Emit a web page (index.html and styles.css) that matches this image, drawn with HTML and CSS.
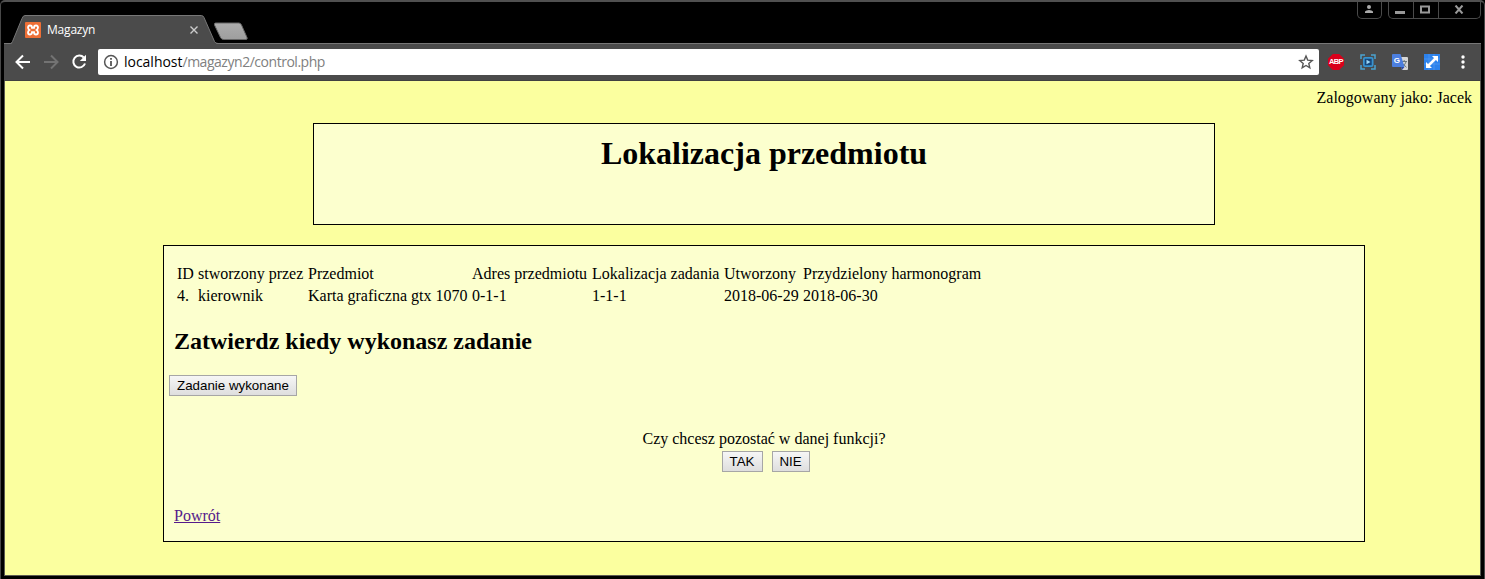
FILE: index.html
```html
<!DOCTYPE html>
<html lang="pl">
<head>
<meta charset="utf-8">
<title>Magazyn</title>
<link rel="stylesheet" href="styles.css">
</head>
<body>
<div class="window">
  <header class="strip">
    <div class="tab">
      <svg class="tab-shape" width="208" height="29" viewBox="0 0 208 29"><path d="M0 28.500H.5Q1.500 28.500 2.500 26.500L12 3.500Q13 .5 15 .5H191.500q1.500 0 2.500 2L204.500 26.500q1 2 3.500 2" fill="#4b4b4b" stroke="#777" stroke-width="1"/><path d="M2 28.500H206" stroke="#4b4b4b"/></svg>
      <svg class="favicon" width="16" height="16" viewBox="0 0 16 16"><rect width="16" height="16" rx="1" fill="#ee6f36"/><path d="M5 3.500C3.500 3.500 3 4.400 3 5.500C3 6.900 3.600 7.400 4.400 8C3.600 8.600 3 9.100 3 10.500C3 11.600 3.500 12.500 5 12.500C6.800 12.500 7 11.500 7 10.200H9C9 11.500 9.200 12.500 11 12.500C12.500 12.500 13 11.600 13 10.500C13 9.100 12.400 8.600 11.600 8C12.400 7.400 13 6.900 13 5.500C13 4.400 12.500 3.500 11 3.500C9.200 3.500 9 4.500 9 5.800H7C7 4.500 6.800 3.500 5 3.500Z" fill="none" stroke="#fff" stroke-width="1.800"/></svg>
      <span class="tab-title">Magazyn</span>
      <svg class="tab-close" width="8" height="8" viewBox="0 0 8 8"><path d="M.5.5l7 7M7.500.5l-7 7" stroke="#ccc" stroke-width="1.400"/></svg>
    </div>
    <svg class="new-tab" width="36" height="19" viewBox="0 0 36 19"><defs><linearGradient id="g" x2="0" y2="1"><stop stop-color="#adadad"/><stop offset="1" stop-color="#9e9e9e"/></linearGradient></defs><path d="M2.500 1H26q1.500 0 2.500 2L34 15.500q.8 2-1 2H10.500q-2 0-3-2L1.500 3Q1 1 2.500 1Z" fill="url(#g)" stroke="#666"/></svg>
    <div class="controls">
      <span class="control user"><svg width="10" height="9" viewBox="0 0 10 9"><circle cx="5" cy="2" r="2" fill="#aaa"/><path d="M1 8V6.500Q2 5 5 5T9 6.500V8Z" fill="#aaa"/></svg></span>
      <span class="control-group">
        <span class="control min"><svg width="10" height="9" viewBox="0 0 10 9"><path d="M0 6h10v3H0z" fill="#999"/></svg></span>
        <span class="control max"><svg width="10" height="9" viewBox="0 0 10 9"><path d="M1 1.500h8v6H1z" fill="none" stroke="#999" stroke-width="2"/></svg></span>
        <span class="control close"><svg width="10" height="9" viewBox="0 0 10 9"><path d="M1.500 .5l7 8M8.500 .5l-7 8" stroke="#999" stroke-width="2"/></svg></span>
      </span>
    </div>
  </header>
  <nav class="toolbar">
    <svg class="nav-icon" width="16" height="16" viewBox="0 0 16 16"><path d="M15 8H2M8 1.500L1.500 8 8 14.500" fill="none" stroke="#fff" stroke-width="2"/></svg>
    <svg class="nav-icon" width="16" height="16" viewBox="0 0 16 16"><path d="M1 8H14M8 1.500L14.500 8 8 14.500" fill="none" stroke="#737373" stroke-width="2"/></svg>
    <svg class="nav-icon" width="16" height="16" viewBox="0 0 16 16"><path d="M12.800 3.500A6 6 0 1 0 14 9.500" fill="none" stroke="#fff" stroke-width="2"/><path d="M15 .8V7H8.800Z" fill="#fff"/></svg>
    <div class="omnibox">
      <svg width="16" height="16" viewBox="0 0 16 16"><circle cx="8" cy="8" r="6.400" fill="none" stroke="#555" stroke-width="1.500"/><path d="M7.100 4h1.800v1.800H7.100zM7.100 7h1.800v5H7.100z" fill="#555"/></svg>
      <span class="url"><b>localhost</b>/magazyn2/control.php</span>
      <svg width="16" height="16" viewBox="0 0 16 16"><path d="M8 2l1.700 4.100 4.500.4-3.400 2.900 1 4.400L8 11.500l-3.800 2.300 1-4.400L1.800 6.500l4.500-.4z" fill="none" stroke="#555" stroke-width="1.400"/></svg>
    </div>
    <div class="extensions">
      <span class="abp">ABP</span>
      <svg width="16" height="16" viewBox="0 0 16 16"><path d="M1 5V1h4M11 1h4v4M15 11v4h-4M5 15H1v-4" fill="none" stroke="#4ba3cf" stroke-width="1.500"/><rect x="3" y="3" width="10.500" height="10" rx="2" fill="#3994cf"/><rect x="4.700" y="4.700" width="7" height="6.600" fill="#164579"/><path d="M6.500 5.800L10.500 8l-4 2.200z" fill="#9cd8f5"/></svg>
      <svg width="16" height="16" viewBox="0 0 16 16"><path d="M7 3h8q1 0 1 1v11q0 1-1 1h-5z" fill="#d6d6d6"/><path d="M9.500 7.500H15M12.200 6v1.500M14 8q-1 3-4 5M10.500 9.500l4 3.800" stroke="#69777d" fill="none"/><path d="M1 0h7.500l4 13H1q-1 0-1-1V1q0-1 1-1z" fill="#4c7fe0"/><path d="M9 13h3.500L10 16z" fill="#304ca5"/><text class="g" x="1.800" y="9.300">G</text></svg>
      <svg width="16" height="16" viewBox="0 0 16 16"><path d="M0 0h16v16H0z" fill="#2c82ec"/><path d="M0 5h16M0 10h16M5 0v16M10 0v16" stroke="#539cf3" stroke-width=".7"/><path d="M4 12l8-8" stroke="#fff" stroke-width="2.500"/><path d="M8 2h6v6zM2 8v6h6z" fill="#fff"/></svg>
      <svg class="menu" width="4" height="14" viewBox="0 0 4 14"><circle cx="2" cy="2" r="1.700" fill="#fff"/><circle cx="2" cy="7" r="1.700" fill="#fff"/><circle cx="2" cy="12" r="1.700" fill="#fff"/></svg>
    </div>
  </nav>
  <main class="page">
    <div class="login">Zalogowany jako: Jacek</div>
    <section class="title-box"><h1>Lokalizacja przedmiotu</h1></section>
    <section class="content">
      <table class="tasks">
        <colgroup><col class="c-id"><col class="c-by"><col class="c-item"><col class="c-addr"><col class="c-loc"><col class="c-made"><col class="c-plan"></colgroup>
        <tr><td>ID</td><td>stworzony przez</td><td>Przedmiot</td><td>Adres przedmiotu</td><td>Lokalizacja zadania</td><td>Utworzony</td><td>Przydzielony harmonogram</td></tr>
        <tr><td>4.</td><td>kierownik</td><td>Karta graficzna gtx 1070</td><td>0-1-1</td><td>1-1-1</td><td>2018-06-29</td><td>2018-06-30</td></tr>
      </table>
      <h2>Zatwierdz kiedy wykonasz zadanie</h2>
      <button class="btn done">Zadanie wykonane</button>
      <p class="question">Czy chcesz pozostać w danej funkcji?</p>
      <div class="answers"><button class="btn yes">TAK</button><button class="btn no">NIE</button></div>
      <a class="back" href="#">Powrót</a>
    </section>
  </main>
</div>
</body>
</html>
```

FILE: styles.css
```css
* { box-sizing: border-box; }
body { margin: 0; overflow: hidden; background: #000; }
svg { display: block; flex: none; }

.window {
  width: 1485px;
  height: 579px;
  display: flex;
  flex-direction: column;
  border: 1px solid #484848;
  border-top: 2px solid #505050;
  border-bottom: 0;
  border-radius: 5px 5px 0 0;
  background: #000;
  padding: 0 3px;
}

/* Tab strip */
.strip {
  height: 42px;
  flex: none;
  display: flex;
  align-items: flex-start;
  border-bottom: 1px solid #777;
}
.tab {
  position: relative;
  width: 208px;
  height: 29px;
  margin: 13px 0 0 6px;
  padding: 0 20px 0 15px;
  display: flex;
  align-items: center;
}
.tab-shape { position: absolute; left: 0; top: 0; }
.favicon, .tab-title, .tab-close { position: relative; }
.tab-title {
  flex: 1;
  margin-left: 6px;
  font: 12px/16px "Open Sans", "Noto Sans", sans-serif;
  letter-spacing: -0.2px;
  color: #fff;
}
.new-tab { margin: 20px 0 0 -5px; }
.controls {
  margin-left: auto;
  display: flex;
  gap: 6px;
}
.control {
  height: 17px;
  display: flex;
  align-items: center;
  justify-content: center;
  padding-bottom: 3px;
}
.user {
  width: 25px;
  padding: 0 2px 2px 0;
  border: 1px solid #4a4a4a;
  border-top: 0;
  border-radius: 0 0 5px 5px;
}
.control-group {
  display: flex;
  border: 1px solid #4a4a4a;
  border-top: 0;
  border-radius: 0 0 5px 5px;
}
.control-group .control { height: 16px; padding: 0 2px 2px 0; }
.min { width: 25px; border-right: 1px solid #4a4a4a; }
.max { width: 25px; border-right: 1px solid #4a4a4a; }
.close { width: 41px; }

/* Toolbar */
.toolbar {
  height: 37px;
  flex: none;
  display: flex;
  align-items: center;
  gap: 12px;
  padding: 0 16px 0 11px;
  background: #4b4b4b;
  border-bottom: 1px solid #414141;
}
.omnibox {
  flex: 1;
  height: 26px;
  margin-left: -1px;
  display: flex;
  align-items: center;
  padding: 0 5px;
  background: #fff;
  border-radius: 2px;
}
.url {
  flex: 1;
  margin-left: 5px;
  font: 14px/20px "Open Sans", "Noto Sans", sans-serif;
  letter-spacing: -0.47px;
  color: #808080;
}
.url b { font-weight: 400; letter-spacing: -0.02px; color: #000; }
.extensions {
  display: flex;
  align-items: center;
  gap: 16px;
  margin-left: -3px;
}
.menu { margin-left: 5px; }
.abp {
  width: 16px;
  height: 16px;
  background: #d9001b;
  clip-path: polygon(30% 0, 70% 0, 100% 30%, 100% 70%, 70% 100%, 30% 100%, 0 70%, 0 30%);
  font: bold 7.5px/16px "Liberation Sans", sans-serif;
  letter-spacing: -0.6px;
  text-align: center;
  color: #fff;
}
.g { font: bold 8px "Liberation Sans", sans-serif; fill: #fff; }

/* Page */
.page {
  height: 495px;
  display: flex;
  flex-direction: column;
  align-items: center;
  padding: 7px 7px 0 0;
  border: 1px solid #5c5c52;
  border-top: 0;
  background: #fbff9f;
  font: 16px/20px "Liberation Serif", "Times New Roman", serif;
  color: #000;
}
.login { align-self: flex-end; height: 35px; margin-right: 1px; }
.title-box {
  width: 902px;
  height: 102px;
  flex: none;
  margin-left: 50px;
  border: 1px solid #000;
  background: #fcffce;
  text-align: center;
}
h1 { margin: 10px 0 0; font-size: 32px; line-height: 38px; }
.content {
  width: 1202px;
  height: 297px;
  flex: none;
  display: flex;
  flex-direction: column;
  align-items: flex-start;
  margin: 20px 0 0 50px;
  padding: 17px 5px 0;
  border: 1px solid #000;
  background: #fcffce;
}
.tasks {
  width: 812px;
  margin-left: 7px;
  table-layout: fixed;
  border-collapse: collapse;
  white-space: nowrap;
}
.tasks td { height: 22px; padding: 0 0 0 1px; line-height: 20px; }
.c-id { width: 21px; }
.c-by { width: 110px; }
.c-item { width: 164px; }
.c-addr { width: 120px; }
.c-loc { width: 132px; }
.c-made { width: 79px; }
.c-plan { width: 186px; }
h2 { margin: 19px 0 0 5px; font-size: 24px; line-height: 30px; }
.btn {
  height: 21px;
  padding: 0;
  border: 1px solid #a6a6a6;
  border-radius: 0;
  background: linear-gradient(#f6f6f6, #dedede);
  font: 13.333px/17px "Liberation Sans", Arial, sans-serif;
  color: #000;
}
.done { width: 128px; margin-top: 19px; }
.question { align-self: center; margin: 33px 0 0; }
.answers { align-self: center; display: flex; gap: 9px; margin: 2px 0 0 3px; }
.yes { width: 41px; }
.no { width: 38px; }
.back { margin: 34px 0 0 5px; color: #551a8b; }
```
